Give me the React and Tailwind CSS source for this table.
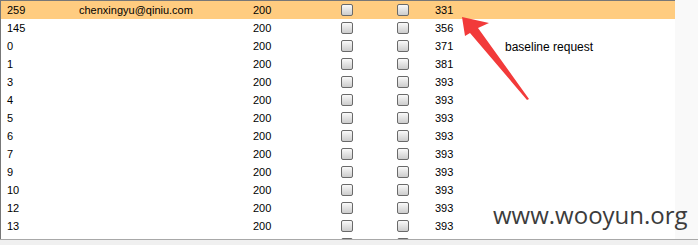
import React from 'react';

const ROWS = [
  { id: '259', user: 'chenxingyu@qiniu.com', status: '200', len: '331', active: true },
  { id: '145', user: '', status: '200', len: '356' },
  { id: '0', user: '', status: '200', len: '371' },
  { id: '1', user: '', status: '200', len: '381' },
  { id: '3', user: '', status: '200', len: '393' },
  { id: '4', user: '', status: '200', len: '393' },
  { id: '5', user: '', status: '200', len: '393' },
  { id: '6', user: '', status: '200', len: '393' },
  { id: '7', user: '', status: '200', len: '393' },
  { id: '9', user: '', status: '200', len: '393' },
  { id: '10', user: '', status: '200', len: '393' },
  { id: '12', user: '', status: '200', len: '393' },
  { id: '13', user: '', status: '200', len: '393' },
  { id: '', user: '', status: '', len: '' },
];

const Box = () => (
  <span className="block w-[12px] h-[12px] rounded-[2px] border border-[#6a6a6a] bg-linear-to-b from-[#fafafa] to-[#cccccc]" />
);

const App = () => {
  return (
    <div className="relative w-[698px] h-[245px] overflow-hidden bg-white font-['Liberation_Sans',Arial,sans-serif] text-[11px] text-black">
      <div className="flex h-[239px]">
        <div className="w-[675px] border-t border-l border-[#777777] overflow-hidden">
          {ROWS.map((r, i) => (
            <div key={i} className={`flex items-center h-[18px] ${r.active ? 'bg-[#ffcc80]' : ''}`}>
              <div className="w-[78px] pl-[6px]">{r.id}</div>
              <div className="w-[174px]">{r.user}</div>
              <div className="w-[88px]">{r.status}</div>
              <div className="w-[56px]"><Box /></div>
              <div className="w-[38px]"><Box /></div>
              <div>{r.len}</div>
            </div>
          ))}
        </div>
        <div className="flex-1 bg-[#f9f9f9]" />
      </div>
      <div className="h-[6px] border-t border-[#a8a8a8] bg-[#f0f0f0]" />

      {/* annotation */}
      <svg className="absolute left-0 top-0" width="698" height="245">
        <polygon
          points="462,17 489,23 478,28 529,99 527,100 470,33 465,36"
          fill="#f23a3a"
        />
      </svg>
      <div className="absolute left-[505px] top-[38px] text-[12px]">baseline request</div>

      {/* watermark */}
      <div className="absolute left-[493px] top-[199px] text-[24px] leading-[32px] text-[#3c3c3c] font-['Open_Sans',sans-serif]">
        www.wooyun.org
      </div>
    </div>
  );
};

export default App;
